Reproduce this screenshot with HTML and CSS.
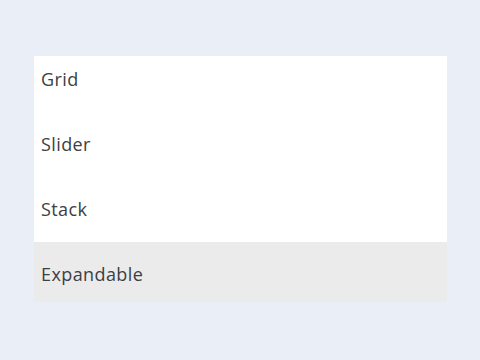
FILE: index.html
```html
<!DOCTYPE html>
<html lang="en">
<head>
    <meta charset="UTF-8">
    <meta name="viewport" content="width=device-width, initial-scale=1.0">
    <title>Layouts</title>
    <link rel="stylesheet" href="styles.css">
</head>
<body>
    <div class="card">
        <ul class="menu">
            <li class="menu-item">Grid</li>
            <li class="menu-item">Slider</li>
            <li class="menu-item">Stack</li>
            <li class="menu-item active">Expandable</li>
        </ul>
    </div>
</body>
</html>
```

FILE: styles.css
```css
* {
    box-sizing: border-box;
    margin: 0;
    padding: 0;
}

body {
    font-family: 'Open Sans', Roboto, sans-serif;
    background-color: #eaeef7;
    padding: 56px 33px 0 34px;
}

.card {
    background: white;
    overflow: hidden;
    height: 246px;
}

.menu {
    list-style: none;
    display: flex;
    flex-direction: column;
    gap: 5px;
    margin-top: -9px;
}

.menu-item {
    height: 60px;
    display: flex;
    align-items: center;
    padding: 3px 7px 0;
    font-size: 18px;
    letter-spacing: 0.4px;
    color: #3c4043;
}

.menu-item.active {
    background-color: #ebebeb;
}
```
